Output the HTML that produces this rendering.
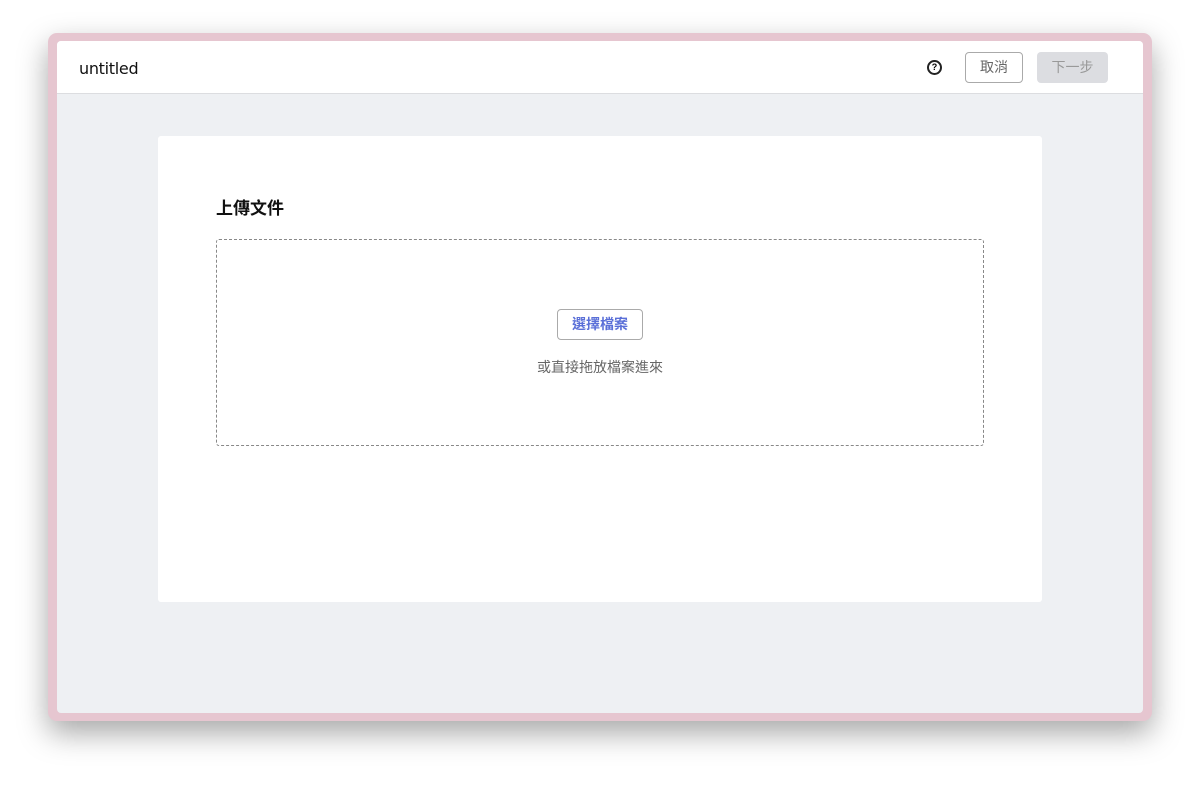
<!DOCTYPE html>
<html><head><meta charset="utf-8"><style>
body{margin:0;width:1200px;height:785px;background:#fff;position:relative;overflow:hidden;font-family:"Liberation Sans","Noto Sans CJK TC",sans-serif}
.frame{position:absolute;left:48px;top:33px;width:1104px;height:688px;background:#e6c6d0;border-radius:9px;box-shadow:0 12px 30px rgba(0,0,0,.35)}
.win{position:absolute;left:57px;top:41px;width:1086px;height:672px;background:#eef0f3;border-radius:4px;overflow:hidden}
.hdr{position:absolute;left:0;top:0;width:1086px;height:52px;background:#fff;border-bottom:1px solid #dcdde0}
.title{position:absolute;left:22px;top:18px;font-size:16px;font-weight:500;color:#111;font-family:"DejaVu Sans","Liberation Sans",sans-serif;letter-spacing:-0.3px}
.help{position:absolute;left:870px;top:19px;width:11px;height:11px;border:2px solid #222;border-radius:50%;font-size:9px;font-weight:bold;text-align:center;line-height:11px}
.btn1{position:absolute;left:908px;top:11px;width:58px;height:31px;border:1px solid #aaa;border-radius:4px;background:#fff;font-size:14px;color:#666;text-align:center;line-height:29px;box-sizing:border-box}
.btn2{position:absolute;left:980px;top:11px;width:71px;height:31px;border-radius:4px;background:#dcdde1;font-size:14px;color:#999;text-align:center;line-height:31px}
.card{position:absolute;left:101px;top:95px;width:884px;height:466px;background:#fff;border-radius:3px}
.h{position:absolute;left:58px;top:58px;font-size:17px;font-weight:bold;color:#111}
.drop{position:absolute;left:58px;top:103px;width:768px;height:207px;border:1.5px dashed #888;border-radius:3px;box-sizing:border-box}
.sel{position:absolute;left:340px;top:69px;width:86px;height:31px;border:1px solid #aaa;border-radius:4px;box-sizing:border-box;color:#5a6fd8;font-size:14px;font-weight:bold;text-align:center;line-height:29px}
.or{position:absolute;left:0;width:100%;top:117px;text-align:center;font-size:14px;color:#666}
</style></head><body>
<div class="frame"></div>
<div class="win">
 <div class="hdr"><div class="title">untitled</div><div class="help">?</div><div class="btn1">取消</div><div class="btn2">下一步</div></div>
 <div class="card"><div class="h">上傳文件</div>
  <div class="drop"><div class="sel">選擇檔案</div><div class="or">或直接拖放檔案進來</div></div>
 </div>
</div>
</body></html>
